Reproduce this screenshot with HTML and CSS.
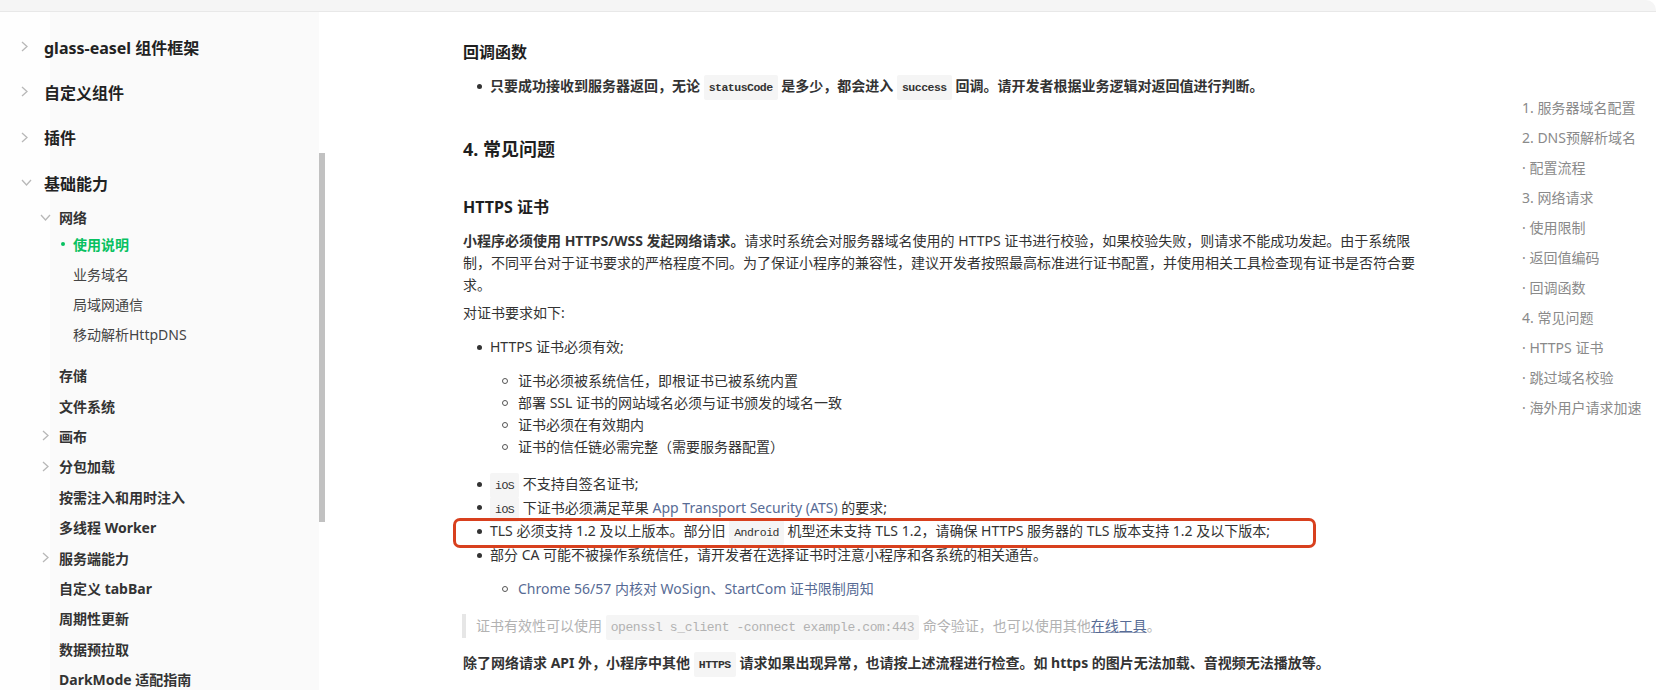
FILE: index.html
```html
<!DOCTYPE html>
<html lang="zh-CN">
<head>
<meta charset="utf-8">
<title>网络 - 使用说明</title>
<link rel="stylesheet" href="styles.css">
</head>
<body>
<div class="topbar"></div>
<div class="layout">
  <aside class="sidebar">
    <div class="nav-l1"><span class="chev"><svg width="7" height="11" viewBox="0 0 7 11"><polyline points="1,1 6,5.5 1,10" /></svg></span>glass-easel 组件框架</div>
    <div class="nav-l1"><span class="chev"><svg width="7" height="11" viewBox="0 0 7 11"><polyline points="1,1 6,5.5 1,10" /></svg></span>自定义组件</div>
    <div class="nav-l1"><span class="chev"><svg width="7" height="11" viewBox="0 0 7 11"><polyline points="1,1 6,5.5 1,10" /></svg></span>插件</div>
    <div class="nav-l1"><span class="chev"><svg width="11" height="7" viewBox="0 0 11 7"><polyline points="1,1 5.5,6 10,1" /></svg></span>基础能力</div>
    <div class="nav-l2 open"><span class="chev2"><svg width="11" height="7" viewBox="0 0 11 7"><polyline points="1,1 5.5,6 10,1" /></svg></span>网络</div>
    <div class="nav-l3-group">
      <div class="nav-l3 active"><span class="dot"></span>使用说明</div>
      <div class="nav-l3">业务域名</div>
      <div class="nav-l3">局域网通信</div>
      <div class="nav-l3">移动解析HttpDNS</div>
    </div>
    <div class="nav-l2"><span class="chev2"></span>存储</div>
    <div class="nav-l2"><span class="chev2"></span>文件系统</div>
    <div class="nav-l2"><span class="chev2"><svg width="7" height="11" viewBox="0 0 7 11"><polyline points="1,1 6,5.5 1,10" /></svg></span>画布</div>
    <div class="nav-l2"><span class="chev2"><svg width="7" height="11" viewBox="0 0 7 11"><polyline points="1,1 6,5.5 1,10" /></svg></span>分包加载</div>
    <div class="nav-l2"><span class="chev2"></span>按需注入和用时注入</div>
    <div class="nav-l2"><span class="chev2"></span>多线程 Worker</div>
    <div class="nav-l2"><span class="chev2"><svg width="7" height="11" viewBox="0 0 7 11"><polyline points="1,1 6,5.5 1,10" /></svg></span>服务端能力</div>
    <div class="nav-l2"><span class="chev2"></span>自定义 tabBar</div>
    <div class="nav-l2"><span class="chev2"></span>周期性更新</div>
    <div class="nav-l2"><span class="chev2"></span>数据预拉取</div>
    <div class="nav-l2"><span class="chev2"></span>DarkMode 适配指南</div>
    <div class="scroll-thumb"></div>
  </aside>

  <main class="content">
    <h4 class="h-cb">回调函数</h4>
    <ul class="list list-cb">
      <li class="row"><strong>只要成功接收到服务器返回，无论 <code>statusCode</code> 是多少，都会进入 <code>success</code> 回调。请开发者根据业务逻辑对返回值进行判断。</strong></li>
    </ul>

    <h3 class="h-faq">4. 常见问题</h3>
    <h4 class="h-https">HTTPS 证书</h4>
    <p class="para"><strong>小程序必须使用 HTTPS/WSS 发起网络请求。</strong>请求时系统会对服务器域名使用的 HTTPS 证书进行校验，如果校验失败，则请求不能成功发起。由于系统限制，不同平台对于证书要求的严格程度不同。为了保证小程序的兼容性，建议开发者按照最高标准进行证书配置，并使用相关工具检查现有证书是否符合要求。</p>
    <p class="para para-req">对证书要求如下:</p>
    <ul class="list list-req">
      <li>HTTPS 证书必须有效;
        <ul class="sublist">
          <li>证书必须被系统信任，即根证书已被系统内置</li>
          <li>部署 SSL 证书的网站域名必须与证书颁发的域名一致</li>
          <li>证书必须在有效期内</li>
          <li>证书的信任链必需完整（需要服务器配置）</li>
        </ul>
      </li>
      <li class="row"><code>iOS</code> 不支持自签名证书;</li>
      <li class="row"><code>iOS</code> 下证书必须满足苹果 <a href="#">App Transport Security (ATS)</a> 的要求;</li>
      <li class="row marked">TLS 必须支持 1.2 及以上版本。部分旧 <code>Android</code> 机型还未支持 TLS 1.2，请确保 HTTPS 服务器的 TLS 版本支持 1.2 及以下版本;</li>
      <li>部分 CA 可能不被操作系统信任，请开发者在选择证书时注意小程序和各系统的相关通告。
        <ul class="sublist sublist-link">
          <li><a href="#">Chrome 56/57 内核对 WoSign、StartCom 证书限制周知</a></li>
        </ul>
      </li>
    </ul>
    <blockquote class="note">证书有效性可以使用 <code>openssl s_client -connect example.com:443</code> 命令验证，也可以使用其他<a href="#">在线工具</a>。</blockquote>
    <p class="para para-last"><strong>除了网络请求 API 外，小程序中其他 <code>HTTPS</code> 请求如果出现异常，也请按上述流程进行检查。如 https 的图片无法加载、音视频无法播放等。</strong></p>
  </main>

  <nav class="toc">
    <div class="toc-item">1. 服务器域名配置</div>
    <div class="toc-item">2. DNS预解析域名</div>
    <div class="toc-item">· 配置流程</div>
    <div class="toc-item">3. 网络请求</div>
    <div class="toc-item">· 使用限制</div>
    <div class="toc-item">· 返回值编码</div>
    <div class="toc-item">· 回调函数</div>
    <div class="toc-item">4. 常见问题</div>
    <div class="toc-item">· HTTPS 证书</div>
    <div class="toc-item">· 跳过域名校验</div>
    <div class="toc-item">· 海外用户请求加速</div>
  </nav>
</div>
</body>
</html>
```
FILE: styles.css
```css
html, body {
  margin: 0;
  padding: 0;
  height: 690px;
  overflow: hidden;
  background: #fff;
}
body {
  font-family: "Noto Sans", "Noto Sans CJK SC", sans-serif;
  font-size: 14px;
  color: #333;
}
.topbar {
  height: 11px;
  margin-right: 8px;
  background: #f5f5f5;
  border-bottom: 1px solid #e8e8e8;
  border-top-right-radius: 10px;
}
.layout {
  display: flex;
  height: 678px;
}

/* Sidebar */
.sidebar {
  position: relative;
  width: 319px;
  flex: 0 0 319px;
  padding-top: 12px;
  box-sizing: border-box;
  background: linear-gradient(to right, #fefefe 50px, #fafafa 50px);
  overflow: visible;
}
.nav-l1 {
  display: flex;
  align-items: center;
  height: 45.3px;
  font-size: 16px;
  font-weight: 700;
  color: #222;
  white-space: nowrap;
}
.chev {
  display: flex;
  align-items: center;
  width: 23px;
  padding-left: 21px;
  box-sizing: content-box;
}
.chev svg, .chev2 svg {
  fill: none;
  stroke: #b8b8b8;
  stroke-width: 1.3;
}
.nav-l2 {
  display: flex;
  align-items: center;
  height: 30.4px;
  padding-left: 40px;
  font-size: 14px;
  font-weight: 700;
  color: #333;
  white-space: nowrap;
}
.nav-l2.open {
  height: 24px;
}
.chev2 {
  display: flex;
  align-items: center;
  width: 19px;
  flex: 0 0 19px;
  padding-left: 2px;
  box-sizing: border-box;
}
.nav-l2.open .chev2 {
  padding-left: 0;
}
.nav-l3-group {
  margin-bottom: 10.8px;
}
.nav-l3 {
  display: flex;
  align-items: center;
  height: 30px;
  padding-left: 73px;
  font-size: 14px;
  color: #444;
  white-space: nowrap;
}
.nav-l3.active {
  padding-left: 61px;
  color: #07c160;
  font-weight: 700;
}
.dot {
  width: 4px;
  height: 4px;
  border-radius: 50%;
  background: #07c160;
  margin-right: 8px;
}
.scroll-thumb {
  position: absolute;
  left: 319px;
  top: 141px;
  width: 6px;
  height: 369px;
  background: #c1c1c1;
}

/* Content */
.content {
  flex: 0 0 960px;
  width: 960px;
  margin-left: 144px;
}
.content h3, .content h4, .content p, .content ul, .content blockquote {
  margin: 0;
  padding: 0;
}
.h-cb {
  margin-top: 28px !important;
  font-size: 16px;
  line-height: 24px;
  font-weight: 700;
  color: #1f1f1f;
}
.list {
  list-style: none;
  padding-left: 27px !important;
}
.list > li {
  line-height: 24px;
}
.list > li.row {
  height: 24px;
}
.list > li::before {
  content: "";
  display: inline-block;
  width: 5px;
  height: 5px;
  border-radius: 50%;
  background: #333;
  margin-left: -13px;
  margin-right: 8px;
  vertical-align: middle;
  position: relative;
  top: -1px;
}
.list-cb {
  margin-top: 10px !important;
}
.list-cb strong {
  font-weight: 700;
}
.h-faq {
  margin-top: 37px !important;
  font-size: 18px;
  line-height: 28px;
  font-weight: 700;
  color: #1f1f1f;
}
.h-https {
  margin-top: 32px !important;
  font-size: 16px;
  line-height: 24px;
  font-weight: 700;
  color: #1f1f1f;
}
.para {
  line-height: 22px;
  margin-top: 11px !important;
}
.para-req {
  margin-top: 6px !important;
}
.list-req {
  margin-top: 11px !important;
}
.list-req > li.row {
  height: 23.7px;
}
.sublist {
  list-style: none;
  padding-left: 28px !important;
  margin: 11px 0 14px 0 !important;
}
.sublist li {
  line-height: 22px;
}
.sublist li::before {
  content: "";
  display: inline-block;
  width: 4px;
  height: 4px;
  border: 1px solid #555;
  border-radius: 50%;
  margin-left: -16px;
  margin-right: 10px;
  vertical-align: middle;
  position: relative;
  top: -1px;
}
.sublist-link {
  margin: 11px 0 0 0 !important;
}
.marked {
  position: relative;
}
.marked::after {
  content: "";
  position: absolute;
  left: -37px;
  top: -1px;
  width: 857px;
  height: 24px;
  border: 3px solid #d8401e;
  border-radius: 7px;
}
code {
  font-family: "Liberation Mono", "DejaVu Sans Mono", monospace;
  font-size: 11.5px;
  letter-spacing: -0.5px;
  line-height: 12px;
  background: #f5f5f5;
  padding: 6px 5px;
  border-radius: 2px;
  color: #333;
}
a {
  color: #576b95;
  text-decoration: none;
}
.note {
  margin-top: 14px !important;
  border-left: 4px solid #e6e6e6;
  padding-left: 10px !important;
  line-height: 24px;
  height: 24px;
  color: #b2b2b2;
  box-sizing: border-box;
  margin-left: -1px !important;
}
.note code {
  font-size: 13px;
  letter-spacing: -0.4px;
  line-height: 13px;
  color: #b2b2b2;
  padding: 5px 5px;
}
.note a {
  text-decoration: underline;
  text-decoration-color: #9aa6bf;
}
.para-last {
  margin-top: 13px !important;
  line-height: 24px;
}

/* TOC */
.toc {
  margin-left: 99px;
  padding-top: 81px;
  width: 142px;
}
.toc-item {
  height: 30px;
  line-height: 30px;
  font-size: 14px;
  color: #8a8a8a;
  white-space: nowrap;
}
```
